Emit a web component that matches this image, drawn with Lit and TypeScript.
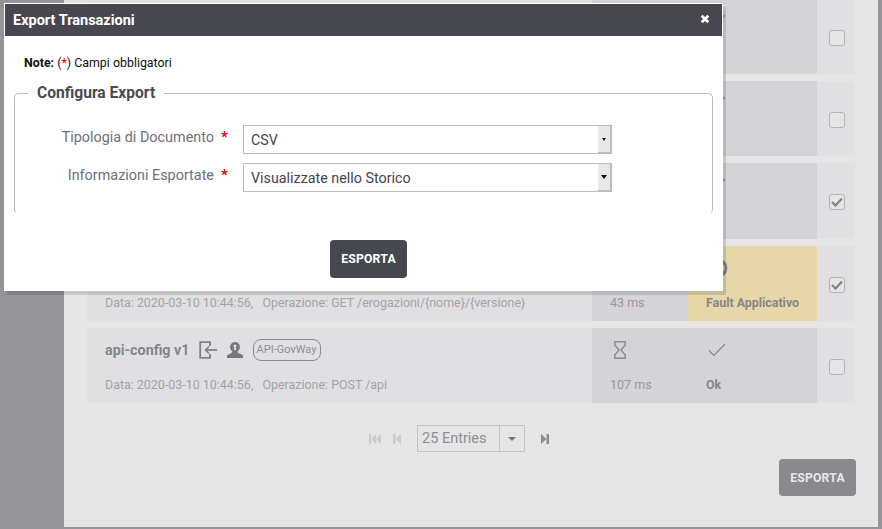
import { LitElement, html, css, svg } from "lit";
import { customElement } from "lit/decorators.js";

interface Row {
  title?: string;
  data?: string;
  time?: string;
  outcome?: string;
  icon: "check" | "fault";
  fault?: boolean;
  checked: boolean;
}

const rows: Row[] = [
  { icon: "check", checked: false },
  { icon: "check", checked: false },
  { icon: "check", checked: true },
  {
    icon: "fault",
    fault: true,
    checked: true,
    data: "Data: 2020-03-10 10:44:56,\u00a0\u00a0 Operazione: GET /erogazioni/{nome}/{versione}",
    time: "43 ms",
    outcome: "Fault Applicativo",
  },
  {
    title: "api-config v1",
    icon: "check",
    checked: false,
    data: "Data: 2020-03-10 10:44:56,\u00a0\u00a0 Operazione: POST /api",
    time: "107 ms",
    outcome: "Ok",
  },
];

const hourglass = svg`<svg width="12" height="18" viewBox="0 0 12 18" fill="none" stroke="#8f8c90" stroke-width="1.5"><path d="M.8.800h10.400v3.400L7 9l4.200 4.800v3.400H.8v-3.400L5 9 .8 4.200z"/></svg>`;
const tick = svg`<svg width="18" height="14" viewBox="0 0 18 14" fill="none" stroke="#8c8a8e" stroke-width="1.2"><path d="M1 7.500l5 5L17 1"/></svg>`;
const faultIcon = svg`<svg width="20" height="20" viewBox="0 0 20 20"><circle cx="10" cy="10" r="8" fill="none" stroke="#85837f" stroke-width="3"/></svg>`;
const loginIcon = svg`<svg width="18" height="18" viewBox="0 0 18 18" fill="none" stroke="#808084" stroke-width="1.8"><path d="M11 5V1.200H1.200v15.600H11V13"/><path d="M18 9H6.500"/><path d="M10 5.500L6.500 9l3.500 3.500" stroke-width="1.600"/></svg>`;
const userIcon = svg`<svg width="16" height="16" viewBox="0 0 16 16"><path fill="#78787c" fill-rule="evenodd" d="M8 0a5 5 0 0 1 5 5c0 1.900-1 3.300-2.200 4.100v1.300L16 13.200V16H0v-2.800l5.200-2.800V9.100C4 8.300 3 6.900 3 5a5 5 0 0 1 5-5zm0 2.600a1.500 1.500 0 0 0-.7 2.800L6.900 8h2.200l-.4-2.600A1.500 1.500 0 0 0 8 2.600z"/></svg>`;
const boxCheck = svg`<svg width="12" height="10" viewBox="0 0 12 10" fill="none" stroke="#848488" stroke-width="2.200"><path d="M1 5l3.500 3.500L11 1.500"/></svg>`;
const closeIcon = svg`<svg width="8" height="8" viewBox="0 0 8 8" stroke="#fff" stroke-width="2.700"><path d="M.7.700l6.600 6.600M7.300.700L.7 7.300"/></svg>`;

const pagerIcon = (kind: "first" | "prev" | "next", color: string) => {
  const paths = {
    first: "M0 0h2v10H0zM2 5l5-5v10zM7 5l5-5v10z",
    prev: "M0 0h2.500v10H0zM2.500 5L8 0v10z",
    next: "M8 0H5.500v10H8zM5.500 5L0 0v10z",
  };
  const w = kind === "first" ? 12 : 8;
  return svg`<svg width=${w} height="10" viewBox="0 0 ${w} 10"><path fill=${color} d=${paths[kind]}/></svg>`;
};

@customElement("app-root")
export class AppRoot extends LitElement {
  static styles = css`
    :host {
      display: block;
      position: relative;
      width: 882px;
      height: 529px;
      overflow: hidden;
      background: #949398;
      font-family: Roboto, "Liberation Sans", sans-serif;
    }
    .page {
      box-sizing: border-box;
      margin-left: 64px;
      width: 814px;
      height: 527px;
      background: #e5e5e5;
      padding: 0 23px;
      overflow: hidden;
    }
    .rows {
      display: flex;
      flex-direction: column;
      gap: 7px;
      margin-top: -1.33px;
    }
    .row {
      display: grid;
      grid-template-columns: 505px 96px 129px 38px;
      height: 75.33px;
      background: #e0e0e2;
    }
    .cell {
      box-sizing: border-box;
      display: grid;
      grid-template-rows: 22px 16px;
      row-gap: 16px;
      padding: 11px 0 0 18px;
      align-items: center;
      justify-items: start;
      min-width: 0;
    }
    .mid {
      background: #d4d3d7;
    }
    .fault {
      background: #e6d6a8;
    }
    .title-line {
      display: flex;
      align-items: center;
    }
    .title {
      font-size: 14.300px;
      font-weight: 700;
      color: #858589;
      margin-right: 9px;
    }
    .user {
      display: flex;
      margin: 0 10px;
    }
    .badge {
      box-sizing: border-box;
      height: 22px;
      width: 68px;
      border: 1px solid #8c8c90;
      border-radius: 8px;
      font-size: 11px;
      color: #8f8f93;
      display: flex;
      align-items: center;
      justify-content: center;
    }
    .data {
      font-size: 12.440px;
      color: #a3a3a7;
      white-space: nowrap;
    }
    .time {
      font-size: 12.500px;
      color: #97979b;
    }
    .icon-time {
      padding-left: 4px;
      display: flex;
    }
    .icon-out {
      padding-left: 2px;
      display: flex;
    }
    .outcome {
      font-size: 12.400px;
      font-weight: 700;
      color: #87878b;
    }
    .check {
      display: flex;
      align-items: center;
      justify-content: center;
      padding: 3px 0 0 1px;
    }
    .box {
      box-sizing: border-box;
      width: 16px;
      height: 16px;
      border: 1px solid #b4b4b6;
      border-radius: 3px;
      background: #e5e5e5;
      display: flex;
      align-items: center;
      justify-content: center;
    }
    .pager {
      display: flex;
      align-items: center;
      justify-content: center;
      margin-top: 22px;
      padding-right: 24px;
    }
    .pg-first {
      display: flex;
      margin-right: 12px;
    }
    .pg-prev {
      display: flex;
      margin-right: 16px;
    }
    .pg-next {
      display: flex;
      margin-left: 16px;
    }
    .pg-select {
      box-sizing: border-box;
      width: 108px;
      height: 27px;
      border: 1px solid #c4c4c6;
      display: flex;
      align-items: center;
      font-size: 14.500px;
      color: #8e8e94;
    }
    .pg-value {
      flex: 1;
      padding-left: 4px;
      border-right: 1px solid #c4c4c6;
      height: 100%;
      display: flex;
      align-items: center;
    }
    .pg-arrow {
      width: 24px;
      display: flex;
      justify-content: center;
    }
    .pg-arrow i {
      border: 4px solid transparent;
      border-top: 4px solid #77777b;
      border-bottom: 0;
    }
    .actions {
      display: flex;
      justify-content: flex-end;
      margin: 7px -1px 0 0;
    }
    .btn {
      box-sizing: border-box;
      border: 0;
      border-radius: 4px;
      width: 77px;
      font: 700 12.200px Roboto, "Liberation Sans", sans-serif;
      letter-spacing: 0.2px;
    }
    .btn-page {
      height: 37px;
      background: #8a898e;
      color: #e8e8e8;
    }
    .modal {
      position: absolute;
      left: 4px;
      top: 3px;
      box-sizing: border-box;
      width: 719px;
      height: 288px;
      padding: 1px;
      background: #fff;
      box-shadow: 3px 4px 0 rgba(0, 0, 0, 0.13);
      display: flex;
      flex-direction: column;
    }
    .head {
      flex: none;
      height: 32px;
      background: #47474f;
      color: #fff;
      display: flex;
      align-items: center;
      justify-content: space-between;
      padding: 0 13px 0 8px;
      font-size: 14.500px;
      font-weight: 700;
    }
    .close {
      display: flex;
      margin-top: -2px;
    }
    .note {
      font-size: 12.400px;
      color: #111;
      margin: 20px 0 0 19px;
      line-height: 14px;
    }
    .note span {
      color: #e00000;
    }
    fieldset {
      box-sizing: border-box;
      margin: 15px 9px 0 9px;
      height: 129px;
      padding: 0;
      border: 1px solid #bcbcbc;
      border-bottom-color: transparent;
      border-radius: 5px;
      min-width: 0;
    }
    legend {
      margin-left: 13px;
      padding: 0 9px;
      font-size: 15.600px;
      font-weight: 700;
      color: #4a4a50;
      line-height: 17px;
    }
    .form {
      display: flex;
      flex-direction: column;
      gap: 9px;
      margin-top: 23px;
    }
    .field {
      display: flex;
      align-items: center;
      height: 29px;
    }
    .label {
      width: 199px;
      text-align: right;
      font-size: 14.400px;
      color: #6e6e7a;
      margin-top: -5px;
    }
    .req {
      width: 29px;
      box-sizing: border-box;
      padding-left: 7px;
      color: #f00000;
      font-size: 15px;
      font-weight: 700;
      margin-top: -5px;
    }
    .select {
      box-sizing: border-box;
      width: 369px;
      height: 29px;
      border: 1px solid #bcbcbc;
      display: flex;
      align-items: stretch;
      font-size: 14.300px;
      color: #45454c;
    }
    .select-value {
      flex: 1;
      display: flex;
      align-items: center;
      padding-left: 7px;
    }
    .select-arrow {
      width: 12px;
      background: #e8e8e8;
      display: flex;
      align-items: center;
      justify-content: center;
      border-bottom: 1px solid #bcbcbc;
      border-right: 1px solid #bcbcbc;
    }
    .select-arrow i {
      border: 2.500px solid transparent;
      border-top: 3px solid #111;
      border-bottom: 0;
    }
    .select-arrow.big i {
      border-width: 4px 3px 0;
    }
    .modal-actions {
      display: flex;
      justify-content: center;
      margin-top: 26px;
      padding-left: 10px;
    }
    .btn-modal {
      height: 38px;
      background: #47474f;
      color: #fff;
    }
  `;

  private renderRow(r: Row) {
    return html`<div class="row">
      <div class="cell">
        ${r.title
          ? html`<div class="title-line">
              <span class="title">${r.title}</span>${loginIcon}
              <span class="user">${userIcon}</span>
              <span class="badge">API-GovWay</span>
            </div>`
          : html`<div></div>`}
        <div class="data">${r.data ?? ""}</div>
      </div>
      <div class="cell mid">
        <div class="icon-time">${hourglass}</div>
        <div class="time">${r.time ?? ""}</div>
      </div>
      <div class="cell ${r.fault ? "fault" : "mid"}">
        <div class="icon-out">${r.icon === "fault" ? faultIcon : tick}</div>
        <div class="outcome">${r.outcome ?? ""}</div>
      </div>
      <div class="check">
        <div class="box">${r.checked ? boxCheck : ""}</div>
      </div>
    </div>`;
  }

  render() {
    return html`
      <div class="page">
        <div class="rows">${rows.map((r) => this.renderRow(r))}</div>
        <div class="pager">
          <span class="pg-first">${pagerIcon("first", "#cbcbcd")}</span>
          <span class="pg-prev">${pagerIcon("prev", "#cbcbcd")}</span>
          <div class="pg-select">
            <div class="pg-value">25 Entries</div>
            <div class="pg-arrow"><i></i></div>
          </div>
          <span class="pg-next">${pagerIcon("next", "#8d8d91")}</span>
        </div>
        <div class="actions"><button class="btn btn-page">ESPORTA</button></div>
      </div>
      <div class="modal">
        <div class="head">
          <span>Export Transazioni</span>
          <span class="close">${closeIcon}</span>
        </div>
        <div class="note"><b>Note:</b> (<span>*</span>) Campi obbligatori</div>
        <fieldset>
          <legend>Configura Export</legend>
          <div class="form">
            <div class="field">
              <div class="label">Tipologia di Documento</div>
              <div class="req">*</div>
              <div class="select">
                <div class="select-value">CSV</div>
                <div class="select-arrow"><i></i></div>
              </div>
            </div>
            <div class="field">
              <div class="label">Informazioni Esportate</div>
              <div class="req">*</div>
              <div class="select">
                <div class="select-value">Visualizzate nello Storico</div>
                <div class="select-arrow big"><i></i></div>
              </div>
            </div>
          </div>
        </fieldset>
        <div class="modal-actions"><button class="btn btn-modal">ESPORTA</button></div>
      </div>
    `;
  }
}
